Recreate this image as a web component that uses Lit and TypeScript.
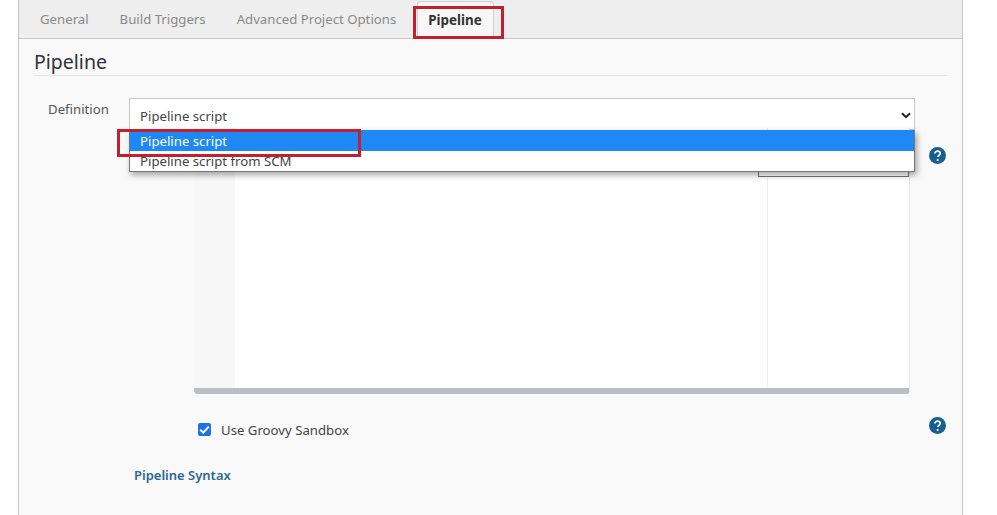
import { LitElement, html, css } from "lit";
import { customElement } from "lit/decorators.js";

@customElement("app-root")
export class AppRoot extends LitElement {
  static styles = css`
    :host { display: block; width: 997px; height: 515px; overflow: hidden; background: #fff;
      font-family: "Noto Sans", "Open Sans", sans-serif; font-size: 13.2px; color: #333; }
    .panel { position: relative; box-sizing: border-box; margin-left: 18px; width: 945px; height: 515px;
      border-left: 1px solid #c4c4c4; border-right: 1px solid #c4c4c4; background: #f9f9f9; }
    .tabs { display: flex; height: 38px; box-sizing: content-box; background: #eeeeee; border-bottom: 1px solid #c8c8c8;
      padding-left: 21px; gap: 31px; align-items: center; color: #8a8a8a; font-size: 13.2px; }
    .tab { white-space: nowrap; }
    .tab.active { margin-left: -10px; margin-top: 1px; height: 37px; display: flex; align-items: center; padding: 0 11px 0 10px;
      background: #f7f7f7; border: 1px solid #d2d2d2; border-bottom: none; border-radius: 4px 4px 0 0;
      font-weight: 700; color: #333; font-size: 13.4px; box-sizing: border-box; }
    .content { padding: 9px 15px 0 15px; }
    h2 { margin: 0; font-size: 19.5px; font-weight: 400; line-height: 27px; color: #2f3338; border-bottom: 1px solid #e2e2e2; }
    .row { display: flex; margin-top: 22px; }
    .label { width: 95px; flex: none; padding: 1px 0 0 14px; box-sizing: border-box; line-height: 20px; color: #555; }
    .select { box-sizing: border-box; width: 786px; height: 32px; background: #fff; border: 1px solid #c8c8c8;
      display: flex; align-items: center; justify-content: space-between; padding: 3px 3px 0 10px; color: #444; }
    .editor-row { display: flex; margin-left: 160px; width: 716px; height: 266px; margin-top: -2px; }
    .editor { position: relative; flex: 1; display: flex; background: #fff; border-right: 1px solid #e6e6e6;
      border-bottom: 6px solid #b8bec4; border-radius: 0 0 4px 4px; box-sizing: border-box; }
    .gutter { width: 41px; flex: none; background: #f7f7f7; }
    .code { flex: 1; }
    .side { width: 141px; flex: none; border-left: 1px solid #f0f0f0; }
    .sample { position: absolute; right: 0; top: 20px; width: 151px; height: 29px; box-sizing: border-box;
      border: 1px solid #777; background: #fff; }
    .check { display: flex; align-items: center; margin: 24px 0 0 164px; height: 22px; color: #444; }
    .check-text { padding-top: 1px; }
    .box { width: 13px; height: 13px; flex: none; background: #1a73e8; border-radius: 2px; margin-right: 10px;
      display: flex; align-items: center; justify-content: center; }
    .link { margin: 25px 0 0 100px; font-weight: 600; font-size: 13px; color: #2b6a94; line-height: 20px; }
    .help { position: absolute; left: 910px; width: 17px; height: 17px; }
    .help.a { top: 147px; }
    .help.b { top: 417px; }
    .dropdown { position: absolute; left: 110px; top: 130px; width: 786px; height: 42px; box-sizing: border-box;
      background: #fff; border: 1px solid #767676; border-top: none; box-shadow: 2px 3px 6px rgba(0,0,0,.35); color: #444; }
    .opt { height: 20px; line-height: 20px; padding-left: 10px; }
    .opt.sel { height: 21px; line-height: 23px; background: #1e88f5; color: #fff; }
    .mark { position: absolute; box-sizing: border-box; border: 3px solid #c0202f; pointer-events: none; }
    .mark.t { left: 394px; top: 6px; width: 91px; height: 33px; }
    .mark.o { left: 98px; top: 129px; width: 244px; height: 28px; }
  `;

  private help(cls: string) {
    return html`<svg class="help ${cls}" viewBox="0 0 17 17">
      <circle cx="8.5" cy="8.5" r="8.5" fill="#15608f"></circle>
      <path d="M5.9 6.6c0-1.5 1.1-2.5 2.7-2.5s2.6 1 2.6 2.2c0 1.1-.6 1.6-1.4 2.2-.7.5-1 .9-1 1.6" fill="none" stroke="#fff" stroke-width="1.7"></path>
      <circle cx="8.7" cy="13" r="1.1" fill="#fff"></circle>
    </svg>`;
  }

  render() {
    return html`
      <div class="panel">
        <div class="tabs">
          <span class="tab">General</span>
          <span class="tab">Build Triggers</span>
          <span class="tab">Advanced Project Options</span>
          <span class="tab active">Pipeline</span>
        </div>
        <div class="content">
          <h2>Pipeline</h2>
          <div class="row">
            <div class="label">Definition</div>
            <div class="select">
              <span>Pipeline script</span>
              <svg width="10" height="7" viewBox="0 0 10 7"><path d="M1 1.2l4 4 4-4" fill="none" stroke="#222" stroke-width="2"></path></svg>
            </div>
          </div>
          <div class="editor-row">
            <div class="editor">
              <div class="gutter"></div>
              <div class="code"></div>
              <div class="side"></div>
              <div class="sample"></div>
            </div>
          </div>
          <div class="check">
            <span class="box"><svg width="11" height="9" viewBox="0 0 11 9"><path d="M1.2 4.6l3 3 5.6-6" fill="none" stroke="#fff" stroke-width="2"></path></svg></span>
            <span class="check-text">Use Groovy Sandbox</span>
          </div>
          <div class="link">Pipeline Syntax</div>
        </div>
        ${this.help("a")}${this.help("b")}
        <div class="dropdown">
          <div class="opt sel">Pipeline script</div>
          <div class="opt">Pipeline script from SCM</div>
        </div>
        <div class="mark t"></div>
        <div class="mark o"></div>
      </div>
    `;
  }
}
